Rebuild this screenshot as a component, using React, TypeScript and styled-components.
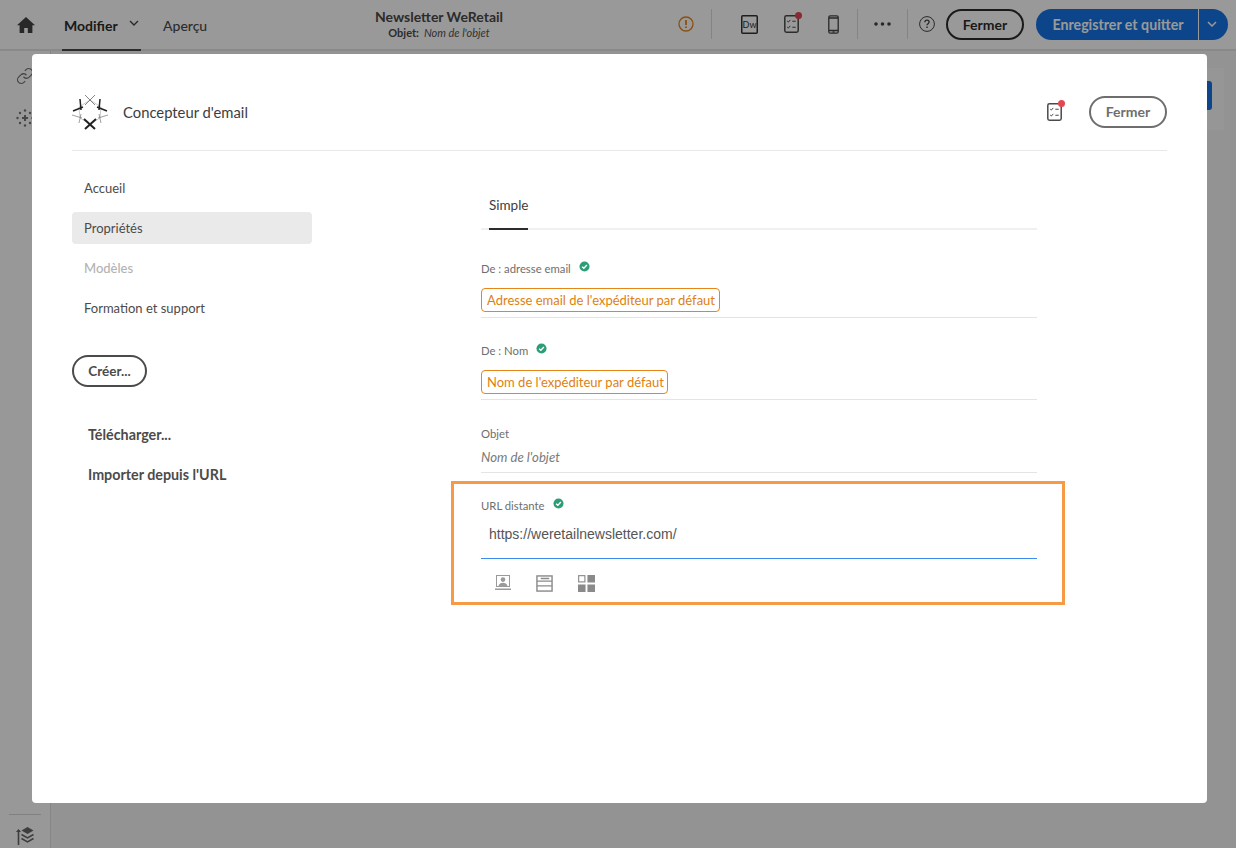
import React from "react";
import styled, { createGlobalStyle } from "styled-components";

const Global = createGlobalStyle`
  html, body { margin: 0; padding: 0; height: 100%; }
  body { font-family: "Lato", "Noto Sans", sans-serif; background: #fff; overflow: hidden; }
  * { box-sizing: border-box; }
`;

const Page = styled.div`
  position: relative;
  width: 1236px;
  height: 848px;
  overflow: hidden;
  background: #f5f5f5;
  display: flex;
  flex-direction: column;
`;
const TopBar = styled.header`
  height: 51px;
  flex: none;
  background: #fff;
  border-bottom: 2px solid #e4e4e4;
  display: flex;
  align-items: stretch;
  color: #2c2c2c;
`;
const HomeSlot = styled.div`
  width: 51px;
  display: flex;
  align-items: center;
  justify-content: center;
  color: #444;
`;
const TabBtn = styled.div<{ $active?: boolean }>`
  display: flex;
  align-items: center;
  font-size: 14px;
  font-weight: ${(p) => (p.$active ? 700 : 500)};
  color: ${(p) => (p.$active ? "#2c2c2c" : "#4b4b4b")};
  height: 49px;
  padding: 2px 0 0 0;
  margin-left: ${(p) => (p.$active ? "13px" : "0")};
  width: ${(p) => (p.$active ? "64px" : "auto")};
  position: relative;
`;
const ActiveLine = styled.span`
  position: absolute;
  left: -2px;
  bottom: -2px;
  width: 79px;
  height: 2px;
  background: #2c2c2c;
  z-index: 1;
`;
const Chevron = styled.div`
  width: 35px;
  height: 49px;
  display: flex;
  justify-content: center;
  padding: 20px 24px 0 0;
  color: #444;
`;
const TitleBlock = styled.div`
  position: absolute;
  left: 316px;
  top: 8px;
  width: 246px;
  text-align: center;
`;
const DocTitle = styled.div`
  font-size: 14px;
  font-weight: 700;
  line-height: 17px;
  color: #4a4a4a;
`;
const DocSub = styled.div`
  font-size: 11px;
  line-height: 15px;
  font-weight: 700;
  color: #4a4a4a;
  i { font-weight: 400; margin-left: 5px; color: #555; }
`;
const Actions = styled.div`
  margin-left: auto;
  display: flex;
  align-items: center;
  height: 48px;
  padding-right: 8px;
`;
const IconSlot = styled.div<{ $w: number }>`
  width: ${(p) => p.$w}px;
  flex: none;
  display: flex;
  justify-content: center;
  align-items: center;
  position: relative;
  color: #4a4a4a;
`;
const IconGroup = styled.div`
  display: flex;
  padding: 0 3px 0 16px;
  flex: none;
`;
const VSep = styled.div`
  width: 1px;
  height: 30px;
  background: #dcdcdc;
  flex: none;
`;
const Dot = styled.span<{ $c: string; $right: number }>`
  position: absolute;
  top: -3px;
  right: ${(p) => p.$right}px;
  width: 7px;
  height: 7px;
  border-radius: 50%;
  background: ${(p) => p.$c};
`;
const Pill = styled.button<{ $w: number; $h?: number; $c?: string }>`
  width: ${(p) => p.$w}px;
  height: ${(p) => p.$h ?? 31}px;
  border: 2px solid ${(p) => p.$c ?? "#4b4b4b"};
  color: ${(p) => p.$c ?? "#4b4b4b"};
  border-radius: 16px;
  background: #fff;
  font: 700 14px "Lato", sans-serif;
  padding: 0;
  flex: none;
`;
const SplitBtn = styled.div`
  display: flex;
  height: 31px;
  margin-left: 12px;
  background: #1473e6;
  border-radius: 16px;
  color: #fff;
  font-weight: 700;
  font-size: 14.2px;
  align-items: center;
`;
const SplitMain = styled.div`
  width: 163px;
  text-align: center;
  padding-left: 2px;
  height: 31px;
  line-height: 31px;
  border-right: 1px solid #fff;
`;
const SplitArrow = styled.div`
  width: 29px;
  display: flex;
  justify-content: center;
  padding-right: 3px;
`;
const Body = styled.div`
  flex: 1;
  display: flex;
`;
const SideRail = styled.aside`
  width: 51px;
  flex: none;
  background: #fdfdfd;
  border-right: 1px solid #e0e0e0;
  display: flex;
  flex-direction: column;
  align-items: center;
  padding-top: 16px;
  gap: 24px;
  color: #777;
`;
const RailFoot = styled.div`
  margin-top: auto;
  width: 32px;
  border-top: 1px solid #d8d8d8;
  padding: 12px 0 3px;
  display: flex;
  justify-content: center;
  color: #666;
`;
const Canvas = styled.main`
  flex: 1;
  padding: 17px 12px 0 0;
  display: flex;
  justify-content: flex-end;
  align-items: flex-start;
`;
const BackPanel = styled.div`
  width: 100px;
  height: 62px;
  background: #fafafa;
  display: flex;
  justify-content: flex-end;
  padding: 13px 12px 0 0;
`;
const BackBtn = styled.div`
  width: 20px;
  height: 29px;
  background: #1473e6;
  border-radius: 0 3px 3px 0;
`;
const Scrim = styled.div`
  position: absolute;
  inset: 0;
  background: rgba(0, 0, 0, 0.4);
`;
const Modal = styled.section`
  position: absolute;
  left: 32px;
  top: 54px;
  width: 1175px;
  height: 749px;
  background: #fff;
  border-radius: 4px;
  padding: 0 40px;
  display: flex;
  flex-direction: column;
`;
const ModalHead = styled.div`
  height: 97px;
  flex: none;
  border-bottom: 1px solid #e8e8e8;
  display: flex;
  align-items: center;
  padding-top: 19px;
`;
const LogoTitle = styled.div`
  font-size: 14.8px;
  color: #3d3d3d;
  margin-left: 15px;
`;
const ModalActions = styled.div`
  margin-left: auto;
  display: flex;
  align-items: center;
  gap: 26px;
`;
const Columns = styled.div`
  display: flex;
  flex: 1;
`;
const Nav = styled.nav`
  width: 240px;
  flex: none;
  padding-top: 21px;
  display: flex;
  flex-direction: column;
`;
const NavItem = styled.div<{ $on?: boolean; $off?: boolean }>`
  height: 32px;
  margin-bottom: 8px;
  border-radius: 4px;
  padding: 0 12px;
  display: flex;
  align-items: center;
  font-size: 13px;
  background: ${(p) => (p.$on ? "#eaeaea" : "transparent")};
  color: ${(p) => (p.$off ? "#b3b3b3" : "#4b4b4b")};
  font-weight: ${(p) => (p.$off ? 500 : 400)};
`;
const CreateBtn = styled(Pill)`
  margin-top: 23px;
  margin-bottom: 28px;
  color: #4b4b4b;
  font-size: 13.5px;
`;
const NavAction = styled.div`
  height: 40px;
  line-height: 40px;
  padding-left: 16px;
  font-size: 14.3px;
  font-weight: 700;
  color: #4b4b4b;
`;
const Form = styled.div`
  width: 556px;
  margin-left: 169px;
  display: flex;
  flex-direction: column;
`;
const TabRow = styled.div`
  height: 79px;
  flex: none;
  border-bottom: 2px solid #f0f0f0;
  padding: 0 0 0 8px;
  display: flex;
  align-items: flex-end;
`;
const Tab = styled.div`
  height: 45px;
  line-height: 17px;
  font-size: 13.5px;
  color: #3d3d3d;
  border-bottom: 2px solid #2c2c2c;
  margin-bottom: -2px;
  padding-top: 12px;
  width: 39px;
`;
const Field = styled.div<{ $h: number }>`
  height: ${(p) => p.$h}px;
  flex: none;
  border-bottom: 1px solid #e4e4e4;
  display: flex;
  flex-direction: column;
  align-items: flex-start;
`;
const LabelRow = styled.div<{ $top: number }>`
  display: flex;
  align-items: center;
  gap: 8px;
  margin-top: ${(p) => p.$top}px;
  height: 14px;
  font-size: 11.3px;
  color: #6e6e6e;
  svg { position: relative; top: -2px; }
`;
const Tag = styled.div<{ $w: number }>`
  margin-top: 13px;
  height: 24px;
  width: ${(p) => p.$w}px;
  border: 1px solid #e68619;
  border-radius: 4px;
  font-size: 13px;
  line-height: 22px;
  color: #e07f10;
  padding-left: 5px;
  white-space: nowrap;
`;
const ItalicValue = styled.div`
  margin-top: 9px;
  font-size: 13.2px;
  font-style: italic;
  color: #7a7a7a;
`;
const Highlight = styled.div`
  margin: 8px 0 0 -30px;
  width: 614px;
  height: 124px;
  border: 3px solid #f79a45;
  padding: 14px 25px 0 27px;
  display: flex;
  flex-direction: column;
`;
const UrlValue = styled.div`
  font-family: "Liberation Sans", sans-serif;
  font-size: 14px;
  color: #555;
  padding: 14px 0 0 8px;
  line-height: 16px;
  height: 47px;
  flex: none;
  border-bottom: 1px solid rgb(60, 140, 235);
`;
const IconRow = styled.div`
  display: flex;
  gap: 25px;
  padding: 16px 0 0 14px;
`;

const Check = () => (
  <svg width="11" height="11" viewBox="0 0 12 12">
    <circle cx="6" cy="6" r="5.5" fill="#2d9d78" />
    <path d="M3.4 6.2l1.9 1.8 3.3-3.6" fill="none" stroke="#fff" strokeWidth="1.5" />
  </svg>
);

const Checklist = () => (
  <svg width="15" height="18" viewBox="0 0 15 18" fill="none" stroke="currentColor">
    <rect x="0.8" y="0.8" width="13.4" height="16.4" rx="1.6" strokeWidth="1.5" />
    <path d="M3.2 6l1.1 1.1 2-2.2M3.2 12l1.1 1.1 2-2.2" strokeWidth="1" />
    <path d="M8.3 6.2h3.4M8.3 12.2h3.4" strokeWidth="1.1" />
  </svg>
);

const Logo = () => (
  <svg width="36" height="36" viewBox="0 0 36 36" fill="none" stroke="#222">
    <path d="M18 6L7 13l1 11 10 6 10-6 1-11z" stroke="#aaa" strokeWidth="0.6" />
    <path d="M13 1l10 10M23 1L13 11" stroke="#666" strokeWidth="0.8" />
    <path d="M1 17l10-4M8 5l1 11" strokeWidth="1.5" />
    <path d="M35 17l-10-4M28 5l-1 11" strokeWidth="1.5" />
    <path d="M12 25l11 10M24 25L13 35" strokeWidth="2" />
    <path d="M0 21l10 3M7 29l2-9M36 21l-10 3M29 29l-2-9" stroke="#777" strokeWidth="0.7" />
  </svg>
);

export default function App() {
  return (
    <Page>
      <Global />
      <TopBar>
        <HomeSlot>
          <svg width="18" height="16" viewBox="0 0 18 16" fill="currentColor">
            <path d="M9 0L0 8.2h2.6V16h4.6v-5h3.6v5h4.6V8.2H18z" />
          </svg>
        </HomeSlot>
        <TabBtn $active>
          Modifier
          <ActiveLine />
        </TabBtn>
        <Chevron>
          <svg width="10" height="6" viewBox="0 0 10 6" fill="none" stroke="currentColor" strokeWidth="1.4">
            <path d="M1 1l4 4 4-4" />
          </svg>
        </Chevron>
        <TabBtn>Aperçu</TabBtn>
        <TitleBlock>
          <DocTitle>Newsletter WeRetail</DocTitle>
          <DocSub>
            Objet:<i>Nom de l'objet</i>
          </DocSub>
        </TitleBlock>
        <Actions>
          <IconSlot $w={50}>
            <svg width="16" height="16" viewBox="0 0 16 16" fill="none" stroke="#e68619" strokeWidth="1.3">
              <circle cx="8" cy="8" r="7" />
              <path d="M8 4v5M8 10.6v1.4" strokeWidth="1.8" />
            </svg>
          </IconSlot>
          <VSep />
          <IconGroup>
            <IconSlot $w={42}>
              <svg width="17" height="19" viewBox="0 0 17 19">
                <rect x="0.75" y="0.75" width="15.5" height="17.5" rx="1" fill="none" stroke="#333" strokeWidth="1.5" />
                <text x="8.5" y="12.5" textAnchor="middle" fontSize="9" fontFamily="Lato" fill="#333">Dw</text>
              </svg>
            </IconSlot>
            <IconSlot $w={42}>
              <Checklist />
              <Dot $c="#e34850" $right={10} />
            </IconSlot>
            <IconSlot $w={42}>
              <svg width="11" height="19" viewBox="0 0 11 19" fill="none" stroke="#444" strokeWidth="1.3">
                <rect x="0.8" y="0.8" width="9.4" height="17.4" rx="1.5" />
                <path d="M1 3h9M1 15.5h9" />
                <path d="M4.5 17h2" />
              </svg>
            </IconSlot>
          </IconGroup>
          <VSep />
          <IconSlot $w={49}>
            <svg width="17" height="4" viewBox="0 0 17 4" fill="#444">
              <circle cx="2" cy="2" r="1.8" />
              <circle cx="8.5" cy="2" r="1.8" />
              <circle cx="15" cy="2" r="1.8" />
            </svg>
          </IconSlot>
          <VSep />
          <IconSlot $w={38}>
            <svg width="16" height="16" viewBox="0 0 16 16" fill="none" stroke="#444" strokeWidth="1">
              <circle cx="8" cy="8" r="7.4" />
              <path d="M5.9 6.2c0-1.3 1-2 2.1-2s2.1.7 2.1 1.9c0 1.6-2.1 1.6-2.1 3.2" strokeWidth="1.3" />
              <path d="M8 10.6v1.5" strokeWidth="1.4" />
            </svg>
          </IconSlot>
          <Pill $w={78} $c="#2c2c2c">Fermer</Pill>
          <SplitBtn>
            <SplitMain>Enregistrer et quitter</SplitMain>
            <SplitArrow>
              <svg width="10" height="6" viewBox="0 0 10 6" fill="none" stroke="#fff" strokeWidth="1.5">
                <path d="M1 1l4 4 4-4" />
              </svg>
            </SplitArrow>
          </SplitBtn>
        </Actions>
      </TopBar>
      <Body>
        <SideRail>
          <svg width="18" height="18" viewBox="0 0 24 24" fill="none" stroke="currentColor" strokeWidth="1.7">
            <path d="M10 13a5 5 0 0 0 7.54.54l3-3a5 5 0 0 0-7.07-7.07l-1.72 1.71" />
            <path d="M14 11a5 5 0 0 0-7.54-.54l-3 3a5 5 0 0 0 7.07 7.07l1.71-1.71" />
          </svg>
          <svg width="18" height="18" viewBox="0 0 18 18" fill="currentColor">
            <path d="M8 6h2v2h2v2h-2v2H8v-2H6V8h2z" />
            <circle cx="9" cy="1.5" r="1.2" />
            <circle cx="9" cy="16.5" r="1.2" />
            <circle cx="1.5" cy="9" r="1.2" />
            <circle cx="16.5" cy="9" r="1.2" />
            <circle cx="4" cy="4" r="1.2" />
            <circle cx="14" cy="4" r="1.2" />
            <circle cx="4" cy="14" r="1.2" />
            <circle cx="14" cy="14" r="1.2" />
          </svg>
          <RailFoot>
            <svg width="18" height="18" viewBox="0 0 18 18" fill="currentColor">
              <path d="M11.5 0l6 3.5-6 3.5-6-3.5z" />
              <path d="M5.5 7.5l6 3.5 6-3.5M5.5 11.5l6 3.5 6-3.5" fill="none" stroke="currentColor" strokeWidth="1.5" />
              <path d="M2.5 3v15" fill="none" stroke="currentColor" strokeWidth="1.6" />
              <path d="M0 5l2.5-3L5 5z" />
            </svg>
          </RailFoot>
        </SideRail>
        <Canvas>
          <BackPanel>
            <BackBtn />
          </BackPanel>
        </Canvas>
      </Body>
      <Scrim />
      <Modal>
        <ModalHead>
          <Logo />
          <LogoTitle>Concepteur d'email</LogoTitle>
          <ModalActions>
            <IconSlot $w={18}>
              <Checklist />
              <Dot $c="#e34850" $right={-2} />
            </IconSlot>
            <Pill $w={78} $h={32} $c="#6e6e6e">Fermer</Pill>
          </ModalActions>
        </ModalHead>
        <Columns>
          <Nav>
            <NavItem>Accueil</NavItem>
            <NavItem $on>Propriétés</NavItem>
            <NavItem $off>Modèles</NavItem>
            <NavItem>Formation et support</NavItem>
            <CreateBtn $w={75} $h={32}>Créer...</CreateBtn>
            <NavAction>Télécharger...</NavAction>
            <NavAction>Importer depuis l'URL</NavAction>
          </Nav>
          <Form>
            <TabRow>
              <Tab>Simple</Tab>
            </TabRow>
            <Field $h={88}>
              <LabelRow $top={31}>
                De : adresse email <Check />
              </LabelRow>
              <Tag $w={239}>Adresse email de l'expéditeur par défaut</Tag>
            </Field>
            <Field $h={82}>
              <LabelRow $top={25}>
                De : Nom <Check />
              </LabelRow>
              <Tag $w={187}>Nom de l'expéditeur par défaut</Tag>
            </Field>
            <Field $h={73}>
              <LabelRow $top={26}>Objet</LabelRow>
              <ItalicValue>Nom de l'objet</ItalicValue>
            </Field>
            <Highlight>
              <LabelRow $top={0}>
                URL distante <Check />
              </LabelRow>
              <UrlValue>https://weretailnewsletter.com/</UrlValue>
              <IconRow>
                <svg width="16" height="16" viewBox="0 0 16 16" fill="#9a9a9a">
                  <path d="M1 0h14v12H1zM2 1v10h12V1z" />
                  <circle cx="8" cy="4.6" r="2.3" />
                  <path d="M3.5 11c.5-2.7 2.5-3.3 4.5-3.3s4 .6 4.5 3.3zM0 13.5h16V15H0z" />
                </svg>
                <svg width="17" height="17" viewBox="0 0 18 18" fill="none" stroke="#8a8a8a" strokeWidth="1.5">
                  <rect x="1" y="1" width="16" height="16" />
                  <path d="M1 6.5h16M1 11.5h16M5 3.7h9" />
                </svg>
                <svg width="17" height="17" viewBox="0 0 18 18" fill="#8a8a8a">
                  <path d="M10 0h8v8h-8zM0 10h8v8H0zM10 10h8v8h-8z" />
                  <rect x="0.7" y="0.7" width="6.6" height="6.6" fill="none" stroke="#8a8a8a" strokeWidth="1.2" />
                </svg>
              </IconRow>
            </Highlight>
          </Form>
        </Columns>
      </Modal>
    </Page>
  );
}
